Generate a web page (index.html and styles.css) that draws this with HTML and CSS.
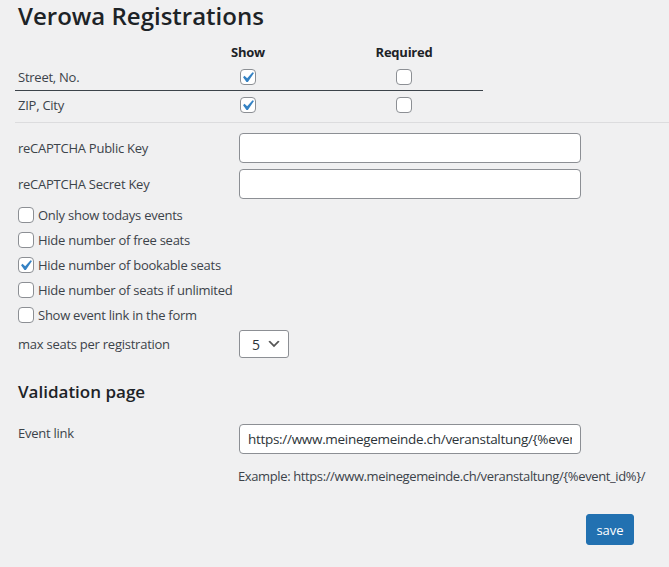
FILE: index.html
```html
<!DOCTYPE html>
<html lang="en">
<head>
<meta charset="utf-8">
<title>Verowa Registrations</title>
<link rel="stylesheet" href="styles.css">
</head>
<body>
<div class="wrap">
  <h1 class="page-title">Verowa Registrations</h1>

  <div class="fields-table">
    <div class="ft-row ft-head">
      <span></span>
      <span class="ft-cell">Show</span>
      <span class="ft-cell">Required</span>
    </div>
    <div class="ft-row ft-first">
      <span class="ft-label">Street, No.</span>
      <span class="ft-cell"><span class="cb checked"><svg viewBox="0 0 20 20"><path d="M14.83 4.89l1.34.94-5.81 8.38H9.02L5.78 9.67l1.34-1.25 2.57 2.4z"/></svg></span></span>
      <span class="ft-cell"><span class="cb"></span></span>
    </div>
    <div class="ft-row">
      <span class="ft-label">ZIP, City</span>
      <span class="ft-cell"><span class="cb checked"><svg viewBox="0 0 20 20"><path d="M14.83 4.89l1.34.94-5.81 8.38H9.02L5.78 9.67l1.34-1.25 2.57 2.4z"/></svg></span></span>
      <span class="ft-cell"><span class="cb"></span></span>
    </div>
  </div>

  <hr class="sep">

  <div class="form-row text-row">
    <label class="row-label">reCAPTCHA Public Key</label>
    <input class="text-input" type="text" value="">
  </div>
  <div class="form-row text-row">
    <label class="row-label">reCAPTCHA Secret Key</label>
    <input class="text-input" type="text" value="">
  </div>

  <div class="check-list">
    <label class="check"><span class="cb"></span>Only show todays events</label>
    <label class="check"><span class="cb"></span>Hide number of free seats</label>
    <label class="check"><span class="cb checked"><svg viewBox="0 0 20 20"><path d="M14.83 4.89l1.34.94-5.81 8.38H9.02L5.78 9.67l1.34-1.25 2.57 2.4z"/></svg></span>Hide number of bookable seats</label>
    <label class="check"><span class="cb"></span>Hide number of seats if unlimited</label>
    <label class="check"><span class="cb"></span>Show event link in the form</label>
  </div>

  <div class="form-row select-row">
    <label class="row-label">max seats per registration</label>
    <span class="select-box"><span class="select-value">5</span><svg class="chev" viewBox="0 0 20 20"><path d="M5 6l5 5 5-5 2 1-7 7-7-7 2-1z"/></svg></span>
  </div>

  <h2 class="section-title">Validation page</h2>

  <div class="form-row top-row">
    <label class="row-label">Event link</label>
    <input class="text-input" type="text" value="https://www.meinegemeinde.ch/veranstaltung/{%event_id%}/">
  </div>
  <p class="description">Example: https://www.meinegemeinde.ch/veranstaltung/{%event_id%}/</p>

  <div class="actions">
    <button class="button-primary" type="button">save</button>
  </div>
</div>
</body>
</html>
```

FILE: styles.css
```css
html, body {
  margin: 0;
  padding: 0;
  background: #f0f0f1;
}
body {
  font-family: "Open Sans", "Noto Sans", sans-serif;
  font-size: 13px;
  letter-spacing: -0.25px;
  color: #3c434a;
  width: 669px;
  height: 567px;
  overflow: hidden;
}
.wrap {
  padding-left: 18px;
}
.page-title {
  margin: 0;
  font-size: 24px;
  font-weight: 600;
  line-height: 32px;
  letter-spacing: 0;
  color: #1d2327;
  height: 41px;
}

/* fields table */
.fields-table {
  margin-left: -3px;
  width: 468px;
}
.ft-row {
  display: grid;
  grid-template-columns: 156px 154px 158px;
  align-items: center;
  height: 27px;
}
.ft-head {
  height: 22px;
  font-weight: 700;
  color: #1d2327;
}
.ft-first {
  border-bottom: 1px solid #3c434a;
}
.ft-label {
  padding-left: 3px;
}
.ft-cell {
  display: flex;
  justify-content: center;
}

/* checkbox */
.cb {
  box-sizing: border-box;
  width: 16px;
  height: 16px;
  border: 1px solid #8c8f94;
  border-radius: 4px;
  background: #fff;
  display: inline-flex;
  flex: none;
  position: relative;
}
.cb svg {
  position: absolute;
  width: 21px;
  height: 21px;
  left: -4px;
  top: -3px;
  fill: #3582c4;
}

.sep {
  margin: 4px 0 0 -3px;
  border: 0;
  border-top: 1px solid #dcdcde;
  height: 0;
}

/* form rows */
.form-row {
  display: flex;
  align-items: center;
}
.row-label {
  width: 221px;
  flex: none;
}
.text-row {
  height: 30px;
  margin-top: 6px;
}
.sep + .text-row {
  margin-top: 10px;
}
.text-input {
  box-sizing: border-box;
  width: 342px;
  height: 30px;
  margin: 0;
  border: 1px solid #8c8f94;
  border-radius: 4px;
  background: #fff;
  padding: 0 8px;
  font-family: inherit;
  font-size: 13.5px;
  letter-spacing: -0.3px;
  color: #2c3338;
  outline: none;
}

.check-list {
  margin-top: 3px;
  display: flex;
  flex-direction: column;
}
.check {
  height: 25px;
  display: flex;
  align-items: center;
  gap: 4px;
}

.select-row {
  margin-top: 3px;
  height: 28px;
}
.select-box {
  box-sizing: border-box;
  width: 50px;
  height: 28px;
  border: 1px solid #8c8f94;
  border-radius: 3px;
  background: #fff;
  display: flex;
  align-items: center;
  justify-content: space-between;
  padding: 0 6px 0 12px;
  font-size: 14px;
  color: #2c3338;
}
.chev {
  width: 16px;
  height: 16px;
  fill: #555;
}

.section-title {
  margin: 22px 0 0;
  font-size: 17px;
  line-height: 24px;
  font-weight: 600;
  letter-spacing: 0;
  color: #1d2327;
}

.top-row {
  margin-top: 20px;
  align-items: flex-start;
}
.top-row .row-label {
  line-height: 18px;
}
.description {
  margin: 13px 0 0 220px;
  line-height: 18px;
  white-space: nowrap;
  letter-spacing: -0.38px;
}

.actions {
  display: flex;
  justify-content: flex-end;
  padding-right: 35px;
  margin-top: 29px;
}
.button-primary {
  font-family: inherit;
  font-size: 13px;
  width: 48px;
  height: 31px;
  background: #2271b1;
  border: 1px solid #2271b1;
  border-radius: 3px;
  color: #fff;
  padding: 0;
  cursor: pointer;
}
```
